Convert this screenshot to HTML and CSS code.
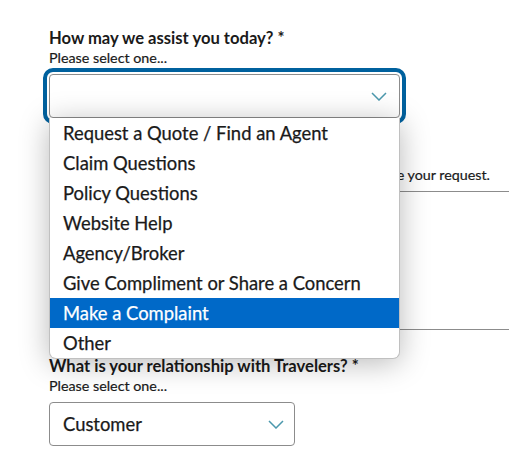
FILE: index.html
```html
<!DOCTYPE html>
<html>
<head>
<link rel="stylesheet" href="styles.css">
</head>
<body>
<form class="contact">
  <div class="field">
    <div class="label">How may we assist you today? *</div>
    <div class="hint">Please select one...</div>
    <div class="select-wrap">
      <div class="select focused">
        <span class="value"></span>
        <svg class="chev" width="16" height="9" viewBox="0 0 16 9"><polyline points="1,1 8,8 15,1" fill="none" stroke="#4b98ad" stroke-width="1.5"/></svg>
      </div>
      <ul class="options">
        <li>Request a Quote / Find an Agent</li>
        <li>Claim Questions</li>
        <li>Policy Questions</li>
        <li>Website Help</li>
        <li>Agency/Broker</li>
        <li>Give Compliment or Share a Concern</li>
        <li class="active">Make a Complaint</li>
        <li>Other</li>
      </ul>
    </div>
  </div>

  <div class="field">
    <div class="desc">Please use the box below to describe your request.</div>
    <div class="textarea"></div>
  </div>

  <div class="field second">
    <div class="label">What is your relationship with Travelers? *</div>
    <div class="hint">Please select one...</div>
    <div class="select small">
      <span class="value">Customer</span>
      <svg class="chev" width="16" height="9" viewBox="0 0 16 9"><polyline points="1,1 8,8 15,1" fill="none" stroke="#4b98ad" stroke-width="1.5"/></svg>
    </div>
  </div>
</form>
</body>
</html>
```

FILE: styles.css
```css
body{
   margin:0;
   background:#fff;
   font-family:Lato, "Open Sans", sans-serif;
   color:#1a1a1a;
   overflow:hidden;
}

.contact{
   padding:28px 0 0 49px;
}

.label{
   font-size:16.6px;
   line-height:20px;
   font-weight:bold;
}

.hint{
   font-size:14.3px;
   line-height:18px;
   margin-top:1px;
   -webkit-text-stroke:0.2px currentColor;
}

.select-wrap{
   position:relative;
   width:351px;
   margin-top:7px;
}

.select{
   box-sizing:border-box;
   height:44px;
   width:351px;
   border:1px solid #8c8c8c;
   border-radius:4px;
   background:#fff;
   display:flex;
   align-items:center;
   justify-content:space-between;
   padding:0 12px 0 13px;
   font-size:18.4px;
   -webkit-text-stroke:0.25px currentColor;
}

.select.focused{
   outline:4px solid #00619e;
   outline-offset:2px;
}

.select.small{
   width:246px;
   margin-top:7px;
   padding-right:10px;
}

.chev{
   display:block;
}

.options{
   position:absolute;
   top:100%;
   left:0;
   z-index:5;
   width:349px;
   margin:0;
   padding:0;
   list-style:none;
   background:#fff;
   border:1px solid #c0c0c0;
   border-top:none;
   border-radius:0 0 7px 7px;
   box-shadow:0 4px 30px rgba(0,0,0,0.28);
   overflow:hidden;
}

.options li{
   height:30px;
   line-height:30px;
   padding-left:13px;
   font-size:18.4px;
   color:#1a1a1a;
   -webkit-text-stroke:0.25px currentColor;
}

.options li.active{
   background:#0069c8;
   color:#fff;
}

.desc{
   margin-top:47px;
   font-size:14.3px;
   line-height:20px;
   width:441px;
   text-align:right;
   -webkit-text-stroke:0.2px currentColor;
}

.textarea{
   margin-top:6px;
   height:137px;
   width:480px;
   border:1px solid #8c8c8c;
}

.second{
   margin-top:26px;
}
```
